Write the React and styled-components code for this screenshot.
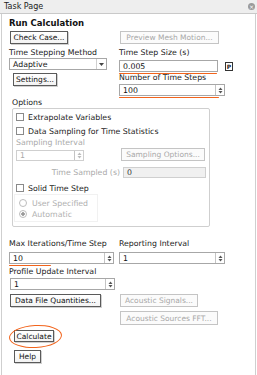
import React from 'react';
import styled, { createGlobalStyle, css } from 'styled-components';

const GlobalStyle = createGlobalStyle`
    html, body {
        margin: 0;
        padding: 0;
        background: #ffffff;
    }
    body {
        font-family: "DejaVu Sans", Verdana, sans-serif;
        font-size: 7.8px;
        color: #1a1a1a;
    }
`;

const ORANGE = '#f2641c';

const Page = styled.div`
    width: 257px;
    height: 375px;
    overflow: hidden;
    display: flex;
    flex-direction: column;
`;

const TitleBar = styled.div`
    height: 13px;
    display: flex;
    align-items: center;
    justify-content: space-between;
    padding: 0 2px 0 4px;
    background: #eeeeee;
    border-bottom: 1px solid #c9c9c9;
    font-size: 8px;
    color: #222;
`;

const CloseIcon = styled.span`
    width: 7px;
    height: 7px;
    border-radius: 50%;
    background: #9a9a9a;
    display: flex;
    align-items: center;
    justify-content: center;
    color: #fff;
    font-size: 6px;
    line-height: 1;
`;

const Panel = styled.div`
    flex: 1;
    margin: 0 1px;
    border-left: 1px solid #cfcfcf;
    border-right: 1px solid #cfcfcf;
    padding-left: 7px;
`;

const Heading = styled.div`
    margin-top: 3px;
    height: 12px;
    line-height: 12px;
    font-weight: bold;
    font-size: 8.5px;
    color: #111;
`;

const Columns = styled.div`
    display: flex;
    margin-top: ${p => p.$mt || 2}px;
`;

const Column = styled.div`
    display: flex;
    flex-direction: column;
    align-items: flex-start;
    width: ${p => p.$width}px;
`;

const Label = styled.div`
    height: ${p => p.$h || 10}px;
    line-height: ${p => p.$h || 10}px;
    margin-top: ${p => p.$mt || 0}px;
    margin-left: ${p => p.$ml || 0}px;
    white-space: nowrap;
    color: ${p => (p.$disabled ? '#a9a9a9' : '#1a1a1a')};
`;

const RightLabel = styled(Label)`
    width: ${p => p.$w}px;
    text-align: right;
`;

const Button = styled.div`
    box-sizing: border-box;
    width: ${p => p.$w}px;
    height: ${p => p.$h || 13}px;
    margin-top: ${p => p.$mt || 0}px;
    margin-left: ${p => p.$ml || 0}px;
    display: flex;
    align-items: center;
    justify-content: center;
    white-space: nowrap;
    overflow: hidden;
    font-size: 7.5px;
    background: linear-gradient(#ffffff, #f3f3f3);
    border: 1px solid #5a5a5a;
    box-shadow: 1px 1px 0 #d0d0d0;
    color: #111;
    ${p => p.$disabled && css`
        border-color: #c4c4c4;
        box-shadow: none;
        color: #a8a8a8;
        background: #fbfbfb;
    `}
`;

const Field = styled.div`
    position: relative;
    box-sizing: border-box;
    width: ${p => p.$w}px;
    height: ${p => p.$h || 12}px;
    margin-top: ${p => p.$mt || 0}px;
    margin-left: ${p => p.$ml || 0}px;
    display: flex;
    align-items: center;
    border: 1px solid #a7a7a7;
    background: #fff;
    color: #111;
    ${p => p.$disabled && css`
        border-color: #cfcfcf;
        color: #a9a9a9;
        background: ${p.$fill ? '#f0f0f0' : '#fff'};
    `}
    ${p => p.$mark && css`
        &::after {
            content: '';
            position: absolute;
            left: -1px;
            bottom: -3px;
            width: ${p.$mark}px;
            height: 1.5px;
            background: ${ORANGE};
            border-radius: 1px;
        }
    `}
`;

const FieldText = styled.span`
    flex: 1;
    padding-left: 3px;
    color: ${p => p.$color || 'inherit'};
`;

const Spin = styled.div`
    width: 8px;
    height: 100%;
    border-left: 1px solid #c4c4c4;
    display: flex;
    align-items: center;
    justify-content: center;
`;

const DropArrow = styled.div`
    width: 9px;
    height: 100%;
    border-left: 1px solid #d0d0d0;
    display: flex;
    align-items: center;
    justify-content: center;
`;

const Row = styled.div`
    display: flex;
    align-items: ${p => p.$align || 'center'};
    margin-top: ${p => p.$mt || 0}px;
`;

const PBox = styled.div`
    box-sizing: border-box;
    width: 8px;
    height: 9px;
    margin-left: 7px;
    border: 1px solid #333;
    font-size: 6px;
    font-weight: bold;
    display: flex;
    align-items: center;
    justify-content: center;
`;

const GroupBox = styled.div`
    box-sizing: border-box;
    width: 198px;
    height: 119px;
    margin-left: 3px;
    border: 1px solid #cfcfcf;
    border-radius: 2px;
    padding-left: 3px;
    display: flex;
    flex-direction: column;
`;

const Check = styled.div`
    display: flex;
    align-items: center;
    height: 10px;
    margin-top: ${p => p.$mt || 0}px;
    white-space: nowrap;
    &::before {
        content: '';
        width: 8px;
        height: 8px;
        box-sizing: border-box;
        border: 1px solid #8a8a8a;
        margin-right: 4px;
        background: #fff;
    }
`;

const RadioBox = styled.div`
    box-sizing: border-box;
    width: 84px;
    height: 28px;
    margin: 1px 0 0 -2px;
    border: 1px solid #f1f1f1;
    padding: 3px 0 0 4px;
`;

const Radio = styled.div`
    display: flex;
    align-items: center;
    height: 10px;
    margin-bottom: 1px;
    color: #b0b0b0;
    &::before {
        content: '';
        width: 8px;
        height: 8px;
        box-sizing: border-box;
        border-radius: 50%;
        border: 1px solid #bdbdbd;
        margin-right: 5px;
        background: ${p => (p.$on ? 'radial-gradient(circle, #9a9a9a 0 1.5px, #fff 2px)' : '#fff')};
    }
`;

const Circle = styled.div`
    position: relative;
    width: 40px;
    margin: 5px 0 0 5px;
    &::after {
        content: '';
        position: absolute;
        left: -5px;
        top: -5px;
        width: 51px;
        height: 21px;
        border: 1.5px solid ${ORANGE};
        border-radius: 50%;
        transform: rotate(-3deg);
        pointer-events: none;
    }
`;

function SpinIcon({ color = '#555' }) {
    return (
        <svg width="5" height="7" viewBox="0 0 5 7">
            <path d="M0.5 3 L2.5 0.5 L4.5 3 Z" fill={color} />
            <path d="M0.5 4 L2.5 6.5 L4.5 4 Z" fill={color} />
        </svg>
    );
}

function SpinField({ value, w, mt, ml, mark, disabled }) {
    return (
        <Field $w={w} $h={disabled ? 11 : 12} $mt={mt} $ml={ml} $mark={mark} $disabled={disabled}>
            <FieldText>{value}</FieldText>
            <Spin><SpinIcon color={disabled ? '#bbb' : '#555'} /></Spin>
        </Field>
    );
}

function App() {
    return (
        <Page>
            <GlobalStyle />
            <TitleBar>
                <span>Task Page</span>
                <CloseIcon>×</CloseIcon>
            </TitleBar>
            <Panel>
                <Heading>Run Calculation</Heading>
                <Columns>
                    <Column $width={110}>
                        <Button $w={58} $ml={1}>Check Case...</Button>
                        <Label $mt={4}>Time Stepping Method</Label>
                        <Field $w={98}>
                            <FieldText>Adaptive</FieldText>
                            <DropArrow>
                                <svg width="5" height="3" viewBox="0 0 5 3">
                                    <path d="M0 0 L5 0 L2.5 3 Z" fill="#444" />
                                </svg>
                            </DropArrow>
                        </Field>
                        <Button $w={44} $mt={3} $ml={4}>Settings...</Button>
                    </Column>
                    <Column $width={130}>
                        <Button $w={99} $ml={1} $disabled>Preview Mesh Motion...</Button>
                        <Label $mt={4}>Time Step Size (s)</Label>
                        <Row $mt={2}>
                            <Field $w={99} $mark={98}>
                                <FieldText>0.005</FieldText>
                            </Field>
                            <PBox>P</PBox>
                        </Row>
                        <Label $h={9} $mt={1}>Number of Time Steps</Label>
                        <SpinField value="100" w={106} mt={2} mark={100} />
                    </Column>
                </Columns>

                <Label $mt={2} $ml={3}>Options</Label>
                <GroupBox>
                    <Check $mt={3}>Extrapolate Variables</Check>
                    <Check $mt={4}>Data Sampling for Time Statistics</Check>
                    <Label $mt={2} $disabled>Sampling Interval</Label>
                    <Row $align="flex-end">
                        <SpinField value="1" w={68} disabled />
                        <Button $w={84} $ml={37} $disabled>Sampling Options...</Button>
                    </Row>
                    <Row $mt={6}>
                        <RightLabel $w={104} $disabled>Time Sampled (s)</RightLabel>
                        <Field $w={83} $h={11} $ml={3} $disabled $fill>
                            <FieldText $color="#333">0</FieldText>
                        </Field>
                    </Row>
                    <Check $mt={5}>Solid Time Step</Check>
                    <RadioBox>
                        <Radio>User Specified</Radio>
                        <Radio $on>Automatic</Radio>
                    </RadioBox>
                </GroupBox>

                <Columns $mt={12}>
                    <Column $width={110}>
                        <Label>Max Iterations/Time Step</Label>
                        <SpinField value="10" w={105} mt={3} mark={42} />
                    </Column>
                    <Column $width={130}>
                        <Label>Reporting Interval</Label>
                        <SpinField value="1" w={106} mt={3} />
                    </Column>
                </Columns>
                <Label $mt={3}>Profile Update Interval</Label>
                <SpinField value="1" w={105} mt={1} ml={1} />
                <Columns $mt={4}>
                    <Column $width={110}>
                        <Button $w={91} $ml={1}>Data File Quantities...</Button>
                    </Column>
                    <Column $width={130}>
                        <Button $w={78} $ml={1} $disabled>Acoustic Signals...</Button>
                        <Button $w={98} $h={14} $ml={1} $mt={4} $disabled>Acoustic Sources FFT...</Button>
                    </Column>
                </Columns>
                <Circle>
                    <Button $w={40} $h={12}>Calculate</Button>
                </Circle>
                <Button $w={27} $mt={8} $ml={5}>Help</Button>
            </Panel>
        </Page>
    );
}

export default App;
